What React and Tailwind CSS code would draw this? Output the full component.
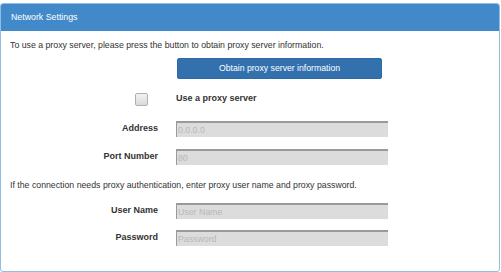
import React from 'react';

const Field = ({ label, placeholder }) => (
  <div className="flex items-center h-[16px]">
    <label className="w-[157px] text-right font-bold text-[#333] text-[9px]">{label}</label>
    <input
      type="text"
      disabled
      placeholder={placeholder}
      className="ml-[18px] w-[212px] h-[16px] bg-[#dcdcdc] border-t-2 border-l border-[#9a9a9a] border-r-0 border-b-0 px-[1px] text-[8.75px] placeholder:text-[#b8b8b8] outline-none"
    />
  </div>
);

const App = () => {
  return (
    <div className="w-[501px] h-[272px] bg-white pt-[3px] font-['Liberation_Sans',Arial,sans-serif]">
      <div className="w-[500px] h-[269px] border border-[#8fbde3] rounded-[3px] overflow-hidden">
        <div className="h-[27px] bg-[#4289c9] text-white text-[8.8px] flex items-center pl-[10px]">
          Network Settings
        </div>
        <div className="pt-[8px] flex flex-col">
          <p className="pl-[9px] text-[8.75px] leading-[13px] text-[#333]">
            To use a proxy server, please press the button to obtain proxy server information.
          </p>
          <div className="mt-[6px] flex pl-[176px]">
            <button className="w-[205px] h-[21px] bg-[#3371ae] text-white text-[8.7px] rounded-[2px] border border-[#2e6aa5]">
              Obtain proxy server information
            </button>
          </div>
          <div className="mt-[13px] flex items-center h-[14px]">
            <div className="w-[157px] flex justify-end pr-[10px]">
              <span className="w-[13px] h-[13px] border border-[#b0b0b0] rounded-[2px] bg-gradient-to-b from-[#f2f2f2] to-[#dadada]" />
            </div>
            <span className="ml-[18px] font-bold text-[#333] text-[9px]">Use a proxy server</span>
          </div>
          <div className="mt-[15px] flex flex-col gap-[12px]">
            <Field label="Address" placeholder="0.0.0.0" />
            <Field label="Port Number" placeholder="80" />
          </div>
          <p className="mt-[14px] pl-[9px] text-[8.75px] leading-[13px] text-[#333]">
            If the connection needs proxy authentication, enter proxy user name and proxy password.
          </p>
          <div className="mt-[11px] flex flex-col gap-[11px]">
            <Field label="User Name" placeholder="User Name" />
            <Field label="Password" placeholder="Password" />
          </div>
        </div>
      </div>
    </div>
  );
};

export default App;
